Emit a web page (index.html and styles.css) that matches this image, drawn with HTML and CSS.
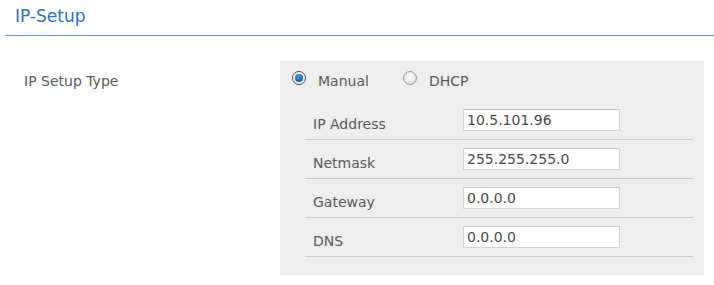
FILE: index.html
```html
<!DOCTYPE html>
<html lang="en">
<head>
  <meta charset="UTF-8" />
  <title>IP-Setup</title>
  <link rel="stylesheet" href="styles.css">
</head>
<body>

  <div class="page-head">
    <h2>IP-Setup</h2>
  </div>

  <div class="setup">
    <div class="setup-label">IP Setup Type</div>

    <div class="setup-panel">
      <div class="type-row">
        <label class="radio"><span class="dot checked"></span>Manual</label>
        <label class="radio"><span class="dot"></span>DHCP</label>
      </div>

      <div class="field-list">
        <div class="field-row">
          <span class="field-name">IP Address</span>
          <input type="text" class="field-input" value="10.5.101.96" />
        </div>
        <div class="field-row">
          <span class="field-name">Netmask</span>
          <input type="text" class="field-input" value="255.255.255.0" />
        </div>
        <div class="field-row">
          <span class="field-name">Gateway</span>
          <input type="text" class="field-input" value="0.0.0.0" />
        </div>
        <div class="field-row">
          <span class="field-name">DNS</span>
          <input type="text" class="field-input" value="0.0.0.0" />
        </div>
      </div>
    </div>
  </div>

</body>
</html>
```

FILE: styles.css
```css
* {
  box-sizing: border-box;
}

body {
  margin: 0;
  font-family: 'DejaVu Sans', Verdana, sans-serif;
  font-size: 14px;
  color: #5a5a5a;
  background: #ffffff;
}

.page-head {
  margin-left: 5px;
  height: 36px;
  border-bottom: 1px solid #6b9bd2;
}

.page-head h2 {
  margin: 0;
  padding: 6px 0 0 10px;
  font-size: 17px;
  font-weight: normal;
  color: #2f6fc4;
}

.setup {
  display: flex;
  padding-top: 25px;
}

.setup-label {
  width: 280px;
  padding: 12px 0 0 24px;
}

.setup-panel {
  width: 424px;
  height: 214px;
  background: #eeeeee;
  padding: 9px 0 0 25px;
}

.type-row {
  display: flex;
  align-items: center;
  height: 22px;
  margin-left: -13px;
}

.radio {
  display: flex;
  align-items: center;
  margin-right: 34px;
}

.dot {
  width: 14px;
  height: 14px;
  border-radius: 50%;
  border: 1px solid #9a9a9a;
  background: radial-gradient(circle at 50% 40%, #ffffff 0%, #e6e6e6 60%, #d0d0d0 100%);
  margin-right: 12px;
  margin-top: -6px;
  position: relative;
}

.dot.checked {
  border-color: #4a4a4a;
  background: #f4f4f4;
}

.dot.checked::after {
  content: "";
  position: absolute;
  left: 2px;
  top: 2px;
  width: 8px;
  height: 8px;
  border-radius: 50%;
  background: radial-gradient(circle at 45% 35%, #4aa3e8 0%, #1566b0 60%, #0b3f74 100%);
}

.field-list {
  width: 388px;
  margin-top: 9px;
}

.field-row {
  display: flex;
  height: 39px;
  border-bottom: 1px solid #cccccc;
}

.field-name {
  width: 158px;
  padding: 15px 0 0 8px;
}

.field-input {
  margin-top: 8px;
  width: 157px;
  height: 22px;
  border: 1px solid #d4d4d4;
  border-top-color: #c4c4c4;
  padding: 0 3px;
  font-family: 'DejaVu Sans', Verdana, sans-serif;
  font-size: 14px;
  color: #4a4a4a;
  background: #ffffff;
  outline: none;
}
```
